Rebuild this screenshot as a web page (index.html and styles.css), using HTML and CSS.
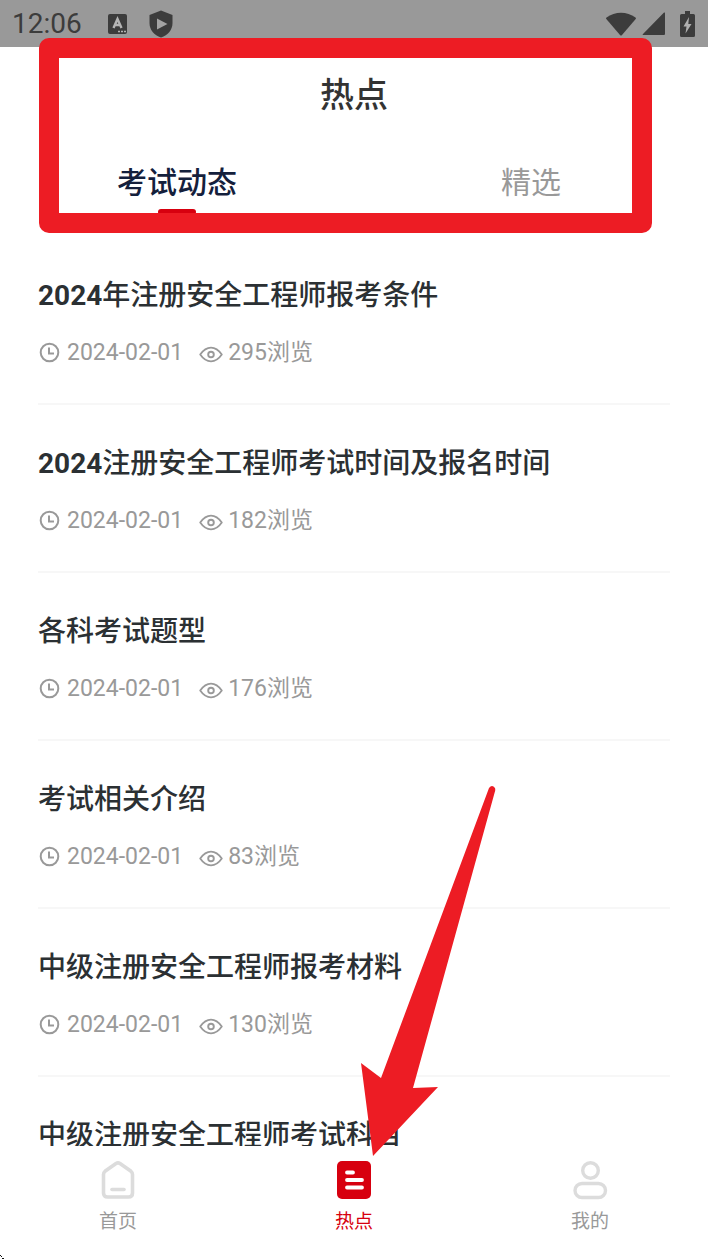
FILE: index.html
```html
<!DOCTYPE html>
<html lang="zh-CN">
<head>
  <meta charset="UTF-8">
  <meta name="viewport" content="width=device-width, initial-scale=1">
  <title>热点</title>
  <link rel="stylesheet" href="styles.css">
</head>
<body>

  <svg class="sprite" aria-hidden="true">
    <symbol id="clock" viewBox="0 0 22 22">
      <circle cx="11.500" cy="10.500" r="8.800" fill="none" stroke="currentColor" stroke-width="2"/>
      <path d="M11 5.500v6h5" fill="none" stroke="currentColor" stroke-width="2"/>
    </symbol>
    <symbol id="eye" viewBox="0 0 24 22">
      <path d="M1.200 12.500Q6 5.600 12 5.600T22.800 12.500Q18 19.400 12 19.400T1.200 12.500Z" fill="none" stroke="currentColor" stroke-width="1.800" stroke-linejoin="round"/>
      <circle cx="12" cy="12.500" r="2.800" fill="none" stroke="currentColor" stroke-width="1.900"/>
    </symbol>
  </svg>

  <div class="app">
    <div class="status-bar">
      <span class="time">12:06</span>
      <svg class="status-a" width="20" height="20" viewBox="0 0 20 20">
        <rect width="19" height="20" rx="2" fill="#3c3c3c"/>
        <path d="M5.500 14L9.500 5l4 9M7 11h5" fill="none" stroke="#b4b4b4" stroke-width="2.400"/>
        <path d="M10 17.500h8" stroke="#b4b4b4" stroke-width="1.400" stroke-dasharray="2 1"/>
      </svg>
      <svg class="status-shield" width="24" height="28" viewBox="0 0 24 28">
        <path d="M12 .5L23.500 5v8c0 7-4.500 12-11.500 14.500C5 25 .5 20 .5 13V5z" fill="#3c3c3c"/>
        <path d="M8 8.500l10.500 5.500L8 19.500z" fill="#a4a4a4"/>
      </svg>
      <span class="status-right">
        <svg width="32" height="24" viewBox="0 0 32 24">
          <path d="M1.500 5.500C10-1 22-1 30.500 5.500q.8.800.2 1.600L17 23q-1 1-2 0L1.300 7.100q-.6-.8.200-1.600z" fill="#3c3c3c"/>
        </svg>
        <svg width="23" height="24" viewBox="0 0 23 24">
          <path d="M23 1v21q0 1-1 1H1q-1 0 0-1L22 .6q1-.6 1 .4z" fill="#3c3c3c"/>
        </svg>
        <svg class="battery" width="15" height="26" viewBox="0 0 15 26">
          <path d="M5 0h5v3h3.500Q15 3 15 4.500v20q0 1.500-1.500 1.500h-12Q0 26 0 24.500v-20Q0 3 1.500 3H5z" fill="#3c3c3c"/>
          <path d="M9 6L3.500 15.500h3L5.500 22.500l6-9.500H8.300z" fill="#b0b0b0"/>
        </svg>
      </span>
    </div>

    <header class="header">
      <h1>热点</h1>
      <nav class="tabs">
        <button class="tab active" type="button">考试动态</button>
        <button class="tab" type="button">精选</button>
      </nav>
    </header>

    <main class="list">
      <article class="item">
        <h2><b>2024</b>年注册安全工程师报考条件</h2>
        <p class="meta">
          <svg class="icon-clock"><use href="#clock"/></svg><time>2024-02-01</time>
          <svg class="icon-eye"><use href="#eye"/></svg><span>295浏览</span>
        </p>
      </article>
      <article class="item">
        <h2><b>2024</b>注册安全工程师考试时间及报名时间</h2>
        <p class="meta">
          <svg class="icon-clock"><use href="#clock"/></svg><time>2024-02-01</time>
          <svg class="icon-eye"><use href="#eye"/></svg><span>182浏览</span>
        </p>
      </article>
      <article class="item">
        <h2>各科考试题型</h2>
        <p class="meta">
          <svg class="icon-clock"><use href="#clock"/></svg><time>2024-02-01</time>
          <svg class="icon-eye"><use href="#eye"/></svg><span>176浏览</span>
        </p>
      </article>
      <article class="item">
        <h2>考试相关介绍</h2>
        <p class="meta">
          <svg class="icon-clock"><use href="#clock"/></svg><time>2024-02-01</time>
          <svg class="icon-eye"><use href="#eye"/></svg><span>83浏览</span>
        </p>
      </article>
      <article class="item">
        <h2>中级注册安全工程师报考材料</h2>
        <p class="meta">
          <svg class="icon-clock"><use href="#clock"/></svg><time>2024-02-01</time>
          <svg class="icon-eye"><use href="#eye"/></svg><span>130浏览</span>
        </p>
      </article>
      <article class="item">
        <h2>中级注册安全工程师考试科目</h2>
      </article>
    </main>

    <nav class="bottom-nav">
      <a href="#home">
        <svg width="38" height="40" viewBox="0 0 38 40">
          <path d="M4.500 14.500Q4.500 12.500 6 11.300L17 3.600q2-1.300 4 0l11 7.700q1.500 1.200 1.500 3.200V33q0 4-4 4h-21q-4 0-4-4z" fill="none" stroke="#dcdcdc" stroke-width="3.600"/>
          <path d="M13 29.500h12" stroke="#dcdcdc" stroke-width="3.600" stroke-linecap="round"/>
        </svg>
        首页
      </a>
      <a href="#hot" class="active">
        <svg width="38" height="40" viewBox="0 0 38 40">
          <rect x="2" y="1" width="34" height="38" rx="5" fill="#d7000f"/>
          <path d="M12 12.500h6M12 20h15M12 27.500h15" stroke="#fff" stroke-width="3.800" stroke-linecap="round"/>
        </svg>
        热点
      </a>
      <a href="#mine">
        <svg width="38" height="40" viewBox="0 0 38 40">
          <circle cx="19.500" cy="10.500" r="7.800" fill="none" stroke="#dcdcdc" stroke-width="3.400"/>
          <rect x="4" y="23.500" width="30.500" height="14" rx="7" fill="none" stroke="#dcdcdc" stroke-width="3.400"/>
        </svg>
        我的
      </a>
    </nav>

    <!-- guide marks on top of the page -->
    <div class="mark-frame"></div>
    <svg class="mark-arrow" width="136" height="371" viewBox="0 0 136 371">
      <path d="M129 3Q132-1 135 3q.6 2-.2 4L53 303l25-1L13 371 1 278l20 15z" fill="#ed1c24"/>
    </svg>
    <svg class="mark-corner" width="4" height="5" viewBox="0 0 4 5">
      <path d="M0 1h1v1H0zM1 2h1v1H1zM2 4h2v1H2z" fill="#111"/>
    </svg>
  </div>

</body>
</html>
```

FILE: styles.css
```css
* {
  box-sizing: border-box;
}

body {
  margin: 0;
  font-family: Roboto, "Noto Sans CJK SC", sans-serif;
  background: #fff;
  color: #2b3033;
}

h1, h2, p {
  margin: 0;
}

.sprite {
  position: absolute;
  width: 0;
  height: 0;
}

.app {
  position: relative;
  display: flex;
  flex-direction: column;
  height: 100vh;
  overflow: hidden;
}

/* status bar */
.status-bar {
  display: flex;
  align-items: center;
  flex: none;
  height: 47px;
  padding: 0 13px 0 12px;
  background: #999;
  color: #3c3c3c;
}

.time {
  font-size: 28px;
  line-height: 32px;
}

.status-a {
  margin-left: 26px;
}

.status-shield {
  margin-left: 21px;
}

.status-right {
  display: flex;
  align-items: center;
  gap: 5px;
  margin-left: auto;
}

.battery {
  margin-left: 10px;
}

/* header */
.header {
  flex: none;
}

.header h1 {
  font-size: 34px;
  font-weight: 500;
  line-height: 96px;
  text-align: center;
  color: #333;
}

.tabs {
  display: flex;
}

.tab {
  display: flex;
  flex-direction: column;
  align-items: center;
  flex: 1;
  height: 72px;
  padding: 20px 0 0;
  border: none;
  background: none;
  font-family: inherit;
  font-size: 30px;
  line-height: 40px;
  color: #999;
  cursor: pointer;
}

.tab.active {
  font-weight: 500;
  color: #14203c;
}

.tab.active::after {
  content: '';
  width: 38px;
  height: 6px;
  margin-top: 6px;
  border-radius: 3px;
  background: #d7000f;
}

/* list */
.list {
  flex: 1;
  min-height: 0;
  padding: 22px 38px 0;
  overflow-y: auto;
  scrollbar-width: none;
}

.item {
  padding: 39px 0 34px;
  border-bottom: 2px solid #f7f7f7;
}

.item h2 {
  font-size: 28px;
  font-weight: 500;
  line-height: 40px;
}

.item h2 b {
  font-weight: 700;
}

.meta {
  display: flex;
  align-items: center;
  margin-top: 21px;
  font-size: 23px;
  line-height: 32px;
  color: #999;
}

.icon-clock {
  width: 22px;
  height: 22px;
  margin-right: 7px;
}

.icon-eye {
  width: 24px;
  height: 22px;
  margin: 0 5px 0 16px;
}

/* bottom navigation */
.bottom-nav {
  display: flex;
  flex: none;
  height: 113px;
  padding-top: 14px;
  background: #fff;
}

.bottom-nav a {
  display: flex;
  flex-direction: column;
  align-items: center;
  flex: 1;
  gap: 9px;
  font-size: 19px;
  line-height: 26px;
  color: #999;
  text-decoration: none;
}

.bottom-nav a.active {
  color: #d7000f;
}

/* marks */
.mark-frame {
  position: absolute;
  top: 38px;
  left: 39px;
  right: 56px;
  height: 195px;
  border: 20px solid #ed1c24;
  border-radius: 10px;
  pointer-events: none;
}

.mark-arrow {
  position: absolute;
  left: 50%;
  bottom: 103px;
  margin-left: 6px;
  pointer-events: none;
}

.mark-corner {
  position: absolute;
  left: 0;
  bottom: 0;
}
```
